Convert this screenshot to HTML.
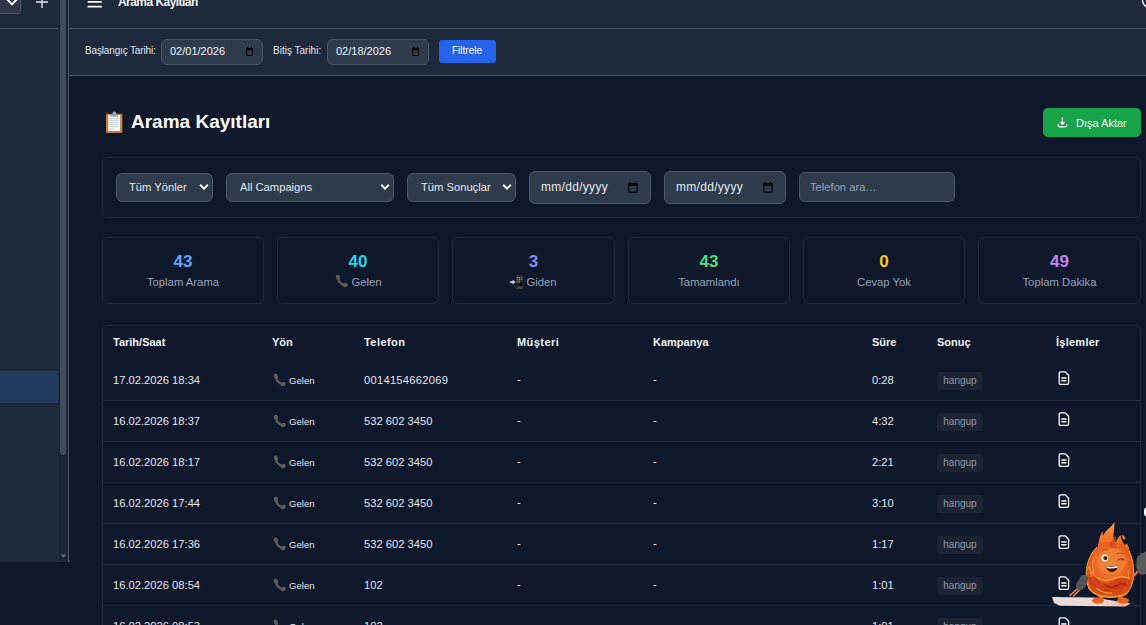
<!DOCTYPE html>
<html><head><meta charset="utf-8">
<style>
*{box-sizing:border-box;margin:0;padding:0}
html,body{width:1146px;height:625px;overflow:hidden;background:#0f172a;font-family:"Liberation Sans",sans-serif;color:#e2e8f0}
.a{position:absolute}
.t{position:absolute;white-space:nowrap;line-height:1}
/* left panel */
#lp{left:0;top:0;width:68px;height:562px;background:#1e293b}
#lpb{left:68px;top:0;width:1px;height:562px;background:#4b5563}
#track{left:59px;top:0;width:9px;height:562px;background:#1b2436}
#thumb{left:60px;top:-10px;width:6px;height:465px;background:#404b5d;border-radius:3px}
/* header */
#hdr{left:69px;top:0;width:1077px;height:76px;background:#1e293b}
.hl{height:1px;background:#475569}
.inp{position:absolute;background:#2f3a4b;border:1px solid #4a5568;border-radius:6px}
.card{position:absolute;border:1px solid #1e293b;border-radius:6px}
.stat .n{position:absolute;left:0;width:100%;text-align:center;font-weight:700;font-size:17px;line-height:1;top:15px}
.stat .l{position:absolute;left:0;width:100%;text-align:center;font-size:11.3px;line-height:1;top:39px;color:#94a3b8}
.th{position:absolute;font-weight:700;font-size:11px;color:#f1f5f9;white-space:nowrap;line-height:1}
.td{position:absolute;font-size:11.2px;color:#e2e8f0;white-space:nowrap;line-height:1}
.sep{position:absolute;left:103px;width:1037px;height:1px;background:#1e293b}
.badge{position:absolute;width:46px;height:18px;background:#1c2434;border-radius:3px;font-size:10px;color:#8e98a8;text-align:center;line-height:18px}
</style></head>
<body>
<!-- left panel -->
<div class="a" id="lp"></div>
<div class="a" id="track"></div>
<div class="a" id="thumb"></div>
<div class="a" id="lpb"></div>
<div class="a hl" style="left:0;top:28px;width:58px"></div>
<div class="a" style="left:-4px;top:-6px;width:25px;height:20px;background:#2d3547;border:1px solid #4b5668;border-radius:3px"></div>
<svg class="a" style="left:6px;top:-1.5px" width="12" height="9" viewBox="0 0 12 9"><path d="M1.4 0.6 L6 5.4 L10.6 0.6" fill="none" stroke="#fff" stroke-width="2"/></svg>
<svg class="a" style="left:35px;top:-5px" width="14" height="14" viewBox="0 0 14 14"><path d="M7 0 V13 M1 7 H13" fill="none" stroke="#e5e7eb" stroke-width="1.4"/></svg>
<div class="a" style="left:0;top:371px;width:58px;height:32px;background:#233a60"></div>
<svg class="a" style="left:59px;top:552px" width="9" height="8" viewBox="0 0 9 8"><path d="M1.5 2.5 H7.5 L4.5 6 Z" fill="#5b6577"/></svg>

<!-- header -->
<div class="a" id="hdr"></div>
<div class="a hl" style="left:69px;top:28px;width:1077px"></div>
<div class="a hl" style="left:69px;top:75px;width:1077px"></div>
<svg class="a" style="left:87px;top:0px" width="16" height="10" viewBox="0 0 16 10"><path d="M1.3 1.8 H14.1 M1.3 6.7 H14.1" fill="none" stroke="#fff" stroke-width="1.8" stroke-linecap="round"/></svg>
<div class="t" style="left:118px;top:-4px;font-size:12px;font-weight:700;letter-spacing:-0.55px;color:#f1f5f9">Arama Kayıtları</div>
<svg class="a" style="left:1136px;top:-8px" width="20" height="18" viewBox="0 0 20 18"><circle cx="14" cy="8" r="7.6" fill="none" stroke="#f1f5f9" stroke-width="1.5"/></svg>

<!-- filter bar -->
<div class="t" style="left:85px;top:46px;font-size:10px;letter-spacing:-0.15px;color:#e2e8f0">Başlangıç Tarihi:</div>
<div class="inp" style="left:161px;top:39px;width:102px;height:26px"></div>
<div class="t" style="left:170px;top:46px;font-size:11px;color:#f1f5f9">02/01/2026</div>
<svg class="a" style="left:246px;top:47px" width="8" height="9" viewBox="0 0 8 9"><rect x="0.55" y="1.55" width="5.9" height="6.9" rx="1" fill="none" stroke="#05070b" stroke-width="1.1"/><rect x="0" y="1" width="7" height="2.3" fill="#05070b"/><rect x="1.1" y="0" width="1" height="1.5" fill="#05070b"/><rect x="4.9" y="0" width="1" height="1.5" fill="#05070b"/></svg>
<div class="t" style="left:273px;top:46px;font-size:10px;color:#e2e8f0">Bitiş Tarihi:</div>
<div class="inp" style="left:327px;top:39px;width:102px;height:26px"></div>
<div class="t" style="left:336px;top:46px;font-size:11px;color:#f1f5f9">02/18/2026</div>
<svg class="a" style="left:412px;top:47px" width="8" height="9" viewBox="0 0 8 9"><rect x="0.55" y="1.55" width="5.9" height="6.9" rx="1" fill="none" stroke="#05070b" stroke-width="1.1"/><rect x="0" y="1" width="7" height="2.3" fill="#05070b"/><rect x="1.1" y="0" width="1" height="1.5" fill="#05070b"/><rect x="4.9" y="0" width="1" height="1.5" fill="#05070b"/></svg>
<div class="a" style="left:439px;top:40px;width:57px;height:23px;background:#2563eb;border-radius:3px"></div>
<div class="t" style="left:452px;top:46px;font-size:10px;color:#fff">Filtrele</div>

<!-- title -->
<svg class="a" style="left:105px;top:111px" width="18" height="22" viewBox="0 0 18 22">
<rect x="1" y="2.8" width="16.4" height="19.1" rx="1.2" fill="#c47c3e"/>
<rect x="3.2" y="4" width="12" height="16" fill="#f7f9fa"/>
<path d="M4.3 7.5H13.6M4.3 9.3H13.6M4.3 11.4H13.6M4.3 13.6H13.6M4.3 15.6H13.6M4.3 18H8.5" stroke="#bcc6ce" stroke-width="0.85"/>
<path d="M5.2 5.8 V4.6 Q5.2 3.4 6.6 3.4 H12 Q13.2 3.4 13.2 4.6 V5.8 Z" fill="#88aebd"/>
<path d="M7.3 3.6 Q7.3 0.6 9.3 0.6 Q11.3 0.6 11.3 3.6 Z" fill="#88aebd"/>
</svg>
<div class="t" style="left:131px;top:112px;font-size:19px;font-weight:700;color:#fff">Arama Kayıtları</div>

<div class="a" style="left:1043px;top:108px;width:98px;height:29px;background:#16a34a;border-radius:5px"></div>
<svg class="a" style="left:1057px;top:117px" width="11" height="11" viewBox="0 0 11 11"><path d="M5.4 0.8 V7.2 M3.5 5.4 L5.4 7.3 L7.3 5.4 M1.2 7.6 V8.6 Q1.2 9.8 2.4 9.8 H8.4 Q9.6 9.8 9.6 8.6 V7.6" fill="none" stroke="#fff" stroke-width="1.25" stroke-linecap="round" stroke-linejoin="round"/></svg>
<div class="t" style="left:1076px;top:118px;font-size:11px;color:#f0fdf4">Dışa Aktar</div>

<!-- filter card -->
<div class="card" style="left:102px;top:157px;width:1039px;height:61px"></div>
<div class="inp" style="left:116px;top:173px;width:97px;height:29px;border-radius:6px"></div>
<div class="t" style="left:129px;top:182px;font-size:11.2px;color:#e2e8f0">Tüm Yönler</div>
<div class="inp" style="left:226px;top:173px;width:168px;height:29px;border-radius:6px"></div>
<div class="t" style="left:240px;top:182px;font-size:11.2px;color:#e2e8f0">All Campaigns</div>
<div class="inp" style="left:407px;top:173px;width:109px;height:29px;border-radius:6px"></div>
<div class="t" style="left:421px;top:182px;font-size:11.2px;color:#e2e8f0">Tüm Sonuçlar</div>
<svg class="a" style="left:199px;top:183px" width="10" height="8" viewBox="0 0 10 8"><path d="M1.2 1.8 L5 5.6 L8.8 1.8" fill="none" stroke="#fff" stroke-width="2"/></svg>
<svg class="a" style="left:380px;top:183px" width="10" height="8" viewBox="0 0 10 8"><path d="M1.2 1.8 L5 5.6 L8.8 1.8" fill="none" stroke="#fff" stroke-width="2"/></svg>
<svg class="a" style="left:502px;top:183px" width="10" height="8" viewBox="0 0 10 8"><path d="M1.2 1.8 L5 5.6 L8.8 1.8" fill="none" stroke="#fff" stroke-width="2"/></svg>
<div class="inp" style="left:529px;top:171px;width:122px;height:33px"></div>
<div class="t" style="left:541px;top:181px;font-size:12px;letter-spacing:0.3px;color:#e2e8f0">mm/dd/yyyy</div>
<svg class="a" style="left:628px;top:182px" width="11" height="11" viewBox="0 0 11 11"><rect x="0.75" y="1.75" width="8.5" height="8.5" rx="1.5" fill="none" stroke="#070a10" stroke-width="1.5"/><rect x="0.2" y="1.2" width="9.6" height="2.8" fill="#05070b"/><path d="M2.5 0V2 M7.5 0V2" stroke="#05070b" stroke-width="1.3"/></svg>
<div class="inp" style="left:664px;top:171px;width:122px;height:33px"></div>
<div class="t" style="left:676px;top:181px;font-size:12px;letter-spacing:0.3px;color:#e2e8f0">mm/dd/yyyy</div>
<svg class="a" style="left:763px;top:182px" width="11" height="11" viewBox="0 0 11 11"><rect x="0.75" y="1.75" width="8.5" height="8.5" rx="1.5" fill="none" stroke="#070a10" stroke-width="1.5"/><rect x="0.2" y="1.2" width="9.6" height="2.8" fill="#05070b"/><path d="M2.5 0V2 M7.5 0V2" stroke="#05070b" stroke-width="1.3"/></svg>
<div class="inp" style="left:799px;top:172px;width:156px;height:30px"></div>
<div class="t" style="left:810px;top:182px;font-size:11.2px;color:#94a3b8">Telefon ara…</div>

<!-- stats -->
<div class="card stat" style="left:102px;top:237px;width:162px;height:67px"><div class="n" style="color:#60a5fa">43</div><div class="l">Toplam Arama</div></div>
<div class="card stat" style="left:277px;top:237px;width:162px;height:67px"><div class="n" style="color:#22d3ee">40</div><div class="l"><span style="display:inline-block;width:13px;height:1px;position:relative;margin-right:4px"><svg style="position:absolute;left:1px;top:-11px" width="13" height="14" viewBox="0 0 13 14"><path d="M2.9 3.6 Q3.6 9.6 10 11.4" fill="none" stroke="#5a5a5a" stroke-width="2.4" stroke-linecap="round"/><ellipse cx="2.9" cy="3.2" rx="2.1" ry="2.6" transform="rotate(-20 2.9 3.2)" fill="#5c5c5c"/><ellipse cx="10.2" cy="11.1" rx="2.6" ry="2.1" transform="rotate(-20 10.2 11.1)" fill="#5c5c5c"/></svg></span>Gelen</div></div>
<div class="card stat" style="left:452px;top:237px;width:163px;height:67px"><div class="n" style="color:#818cf8">3</div><div class="l"><span style="display:inline-block;width:13px;height:1px;position:relative;margin-right:3px"><svg style="position:absolute;left:0;top:-10px" width="14" height="15" viewBox="0 0 14 15"><path d="M0.9 7.1 H3.4" stroke="#d3dde2" stroke-width="1.8" stroke-linecap="round"/><path d="M2.6 4.6 L5.4 7.1 L2.6 9.6 Z" fill="#d3dde2"/><rect x="6.1" y="0.2" width="7" height="13.8" rx="1.1" fill="#3c3c3c"/><rect x="6.7" y="1.6" width="5.8" height="11" fill="#050505"/><rect x="6.8" y="2" width="1.8" height="1.5" fill="#d88a20"/><rect x="8.8" y="2" width="1.6" height="1.5" fill="#e0608a"/><rect x="10.6" y="2" width="1.8" height="1.5" fill="#2a6a9a"/><rect x="6.8" y="3.8" width="1.8" height="1.5" fill="#2a8a6a"/><rect x="8.8" y="3.8" width="1.6" height="1.5" fill="#e07a20"/><rect x="10.6" y="3.8" width="1.8" height="1.5" fill="#2a7a9a"/><rect x="6.8" y="5.6" width="1.8" height="1.5" fill="#c05a30"/><rect x="8.8" y="5.6" width="1.6" height="1.5" fill="#30a070"/><rect x="6.8" y="7.3" width="3.6" height="0.9" fill="#3a90c0"/><rect x="6.8" y="11.3" width="1.8" height="1.3" fill="#2a5a8a"/><rect x="8.8" y="11.3" width="1.6" height="1.3" fill="#2a9a6a"/><rect x="10.6" y="11.3" width="1.8" height="1.3" fill="#a03a4a"/></svg></span>Giden</div></div>
<div class="card stat" style="left:628px;top:237px;width:162px;height:67px"><div class="n" style="color:#4ade80">43</div><div class="l">Tamamlandı</div></div>
<div class="card stat" style="left:803px;top:237px;width:162px;height:67px"><div class="n" style="color:#facc15">0</div><div class="l">Cevap Yok</div></div>
<div class="card stat" style="left:978px;top:237px;width:163px;height:67px"><div class="n" style="color:#c084fc">49</div><div class="l">Toplam Dakika</div></div>

<!-- table -->
<div class="card" style="left:102px;top:325px;width:1039px;height:400px"></div>
<div class="th" style="left:113px;top:337px">Tarih/Saat</div>
<div class="th" style="left:272px;top:337px">Yön</div>
<div class="th" style="left:364px;top:337px;letter-spacing:0.45px">Telefon</div>
<div class="th" style="left:517px;top:337px;letter-spacing:0.45px">Müşteri</div>
<div class="th" style="left:653px;top:337px">Kampanya</div>
<div class="th" style="left:872px;top:337px">Süre</div>
<div class="th" style="left:937px;top:337px">Sonuç</div>
<div class="th" style="left:1056px;top:337px;letter-spacing:0.25px">İşlemler</div>

<!--ROWS-->
<div class="td" style="left:113px;top:375px">17.02.2026 18:34</div>
<svg class="a" style="left:273px;top:373px" width="13" height="14" viewBox="0 0 13 14"><path d="M2.9 3.6 Q3.6 9.6 10 11.4" fill="none" stroke="#5a5a5a" stroke-width="2.4" stroke-linecap="round"/><ellipse cx="2.9" cy="3.2" rx="2.1" ry="2.6" transform="rotate(-20 2.9 3.2)" fill="#5c5c5c"/><ellipse cx="10.2" cy="11.1" rx="2.6" ry="2.1" transform="rotate(-20 10.2 11.1)" fill="#5c5c5c"/></svg>
<div class="td" style="left:289px;top:376px;font-size:9.6px">Gelen</div>
<div class="td" style="left:364px;top:375px;letter-spacing:0.25px">0014154662069</div>
<div class="td" style="left:517px;top:374px">-</div>
<div class="td" style="left:653px;top:374px">-</div>
<div class="td" style="left:872px;top:375px">0:28</div>
<div class="badge" style="left:937px;top:372px">hangup</div>
<svg class="a" style="left:1058px;top:371px" width="13" height="15" viewBox="0 0 13 15"><path d="M2.8 0.9 H7.3 L10.6 4.2 V11.8 Q10.6 13.4 9 13.4 H2.8 Q1.2 13.4 1.2 11.8 V2.5 Q1.2 0.9 2.8 0.9 Z" fill="none" stroke="#fff" stroke-width="1.3" stroke-linejoin="round"/><path d="M3.8 7 H8 M3.8 9.8 H8" stroke="#fff" stroke-width="1.4" stroke-linecap="round"/></svg>
<div class="sep" style="top:400px"></div>
<div class="td" style="left:113px;top:416px">16.02.2026 18:37</div>
<svg class="a" style="left:273px;top:414px" width="13" height="14" viewBox="0 0 13 14"><path d="M2.9 3.6 Q3.6 9.6 10 11.4" fill="none" stroke="#5a5a5a" stroke-width="2.4" stroke-linecap="round"/><ellipse cx="2.9" cy="3.2" rx="2.1" ry="2.6" transform="rotate(-20 2.9 3.2)" fill="#5c5c5c"/><ellipse cx="10.2" cy="11.1" rx="2.6" ry="2.1" transform="rotate(-20 10.2 11.1)" fill="#5c5c5c"/></svg>
<div class="td" style="left:289px;top:417px;font-size:9.6px">Gelen</div>
<div class="td" style="left:364px;top:416px">532 602 3450</div>
<div class="td" style="left:517px;top:415px">-</div>
<div class="td" style="left:653px;top:415px">-</div>
<div class="td" style="left:872px;top:416px">4:32</div>
<div class="badge" style="left:937px;top:413px">hangup</div>
<svg class="a" style="left:1058px;top:412px" width="13" height="15" viewBox="0 0 13 15"><path d="M2.8 0.9 H7.3 L10.6 4.2 V11.8 Q10.6 13.4 9 13.4 H2.8 Q1.2 13.4 1.2 11.8 V2.5 Q1.2 0.9 2.8 0.9 Z" fill="none" stroke="#fff" stroke-width="1.3" stroke-linejoin="round"/><path d="M3.8 7 H8 M3.8 9.8 H8" stroke="#fff" stroke-width="1.4" stroke-linecap="round"/></svg>
<div class="sep" style="top:441px"></div>
<div class="td" style="left:113px;top:457px">16.02.2026 18:17</div>
<svg class="a" style="left:273px;top:455px" width="13" height="14" viewBox="0 0 13 14"><path d="M2.9 3.6 Q3.6 9.6 10 11.4" fill="none" stroke="#5a5a5a" stroke-width="2.4" stroke-linecap="round"/><ellipse cx="2.9" cy="3.2" rx="2.1" ry="2.6" transform="rotate(-20 2.9 3.2)" fill="#5c5c5c"/><ellipse cx="10.2" cy="11.1" rx="2.6" ry="2.1" transform="rotate(-20 10.2 11.1)" fill="#5c5c5c"/></svg>
<div class="td" style="left:289px;top:458px;font-size:9.6px">Gelen</div>
<div class="td" style="left:364px;top:457px">532 602 3450</div>
<div class="td" style="left:517px;top:456px">-</div>
<div class="td" style="left:653px;top:456px">-</div>
<div class="td" style="left:872px;top:457px">2:21</div>
<div class="badge" style="left:937px;top:454px">hangup</div>
<svg class="a" style="left:1058px;top:453px" width="13" height="15" viewBox="0 0 13 15"><path d="M2.8 0.9 H7.3 L10.6 4.2 V11.8 Q10.6 13.4 9 13.4 H2.8 Q1.2 13.4 1.2 11.8 V2.5 Q1.2 0.9 2.8 0.9 Z" fill="none" stroke="#fff" stroke-width="1.3" stroke-linejoin="round"/><path d="M3.8 7 H8 M3.8 9.8 H8" stroke="#fff" stroke-width="1.4" stroke-linecap="round"/></svg>
<div class="sep" style="top:482px"></div>
<div class="td" style="left:113px;top:498px">16.02.2026 17:44</div>
<svg class="a" style="left:273px;top:496px" width="13" height="14" viewBox="0 0 13 14"><path d="M2.9 3.6 Q3.6 9.6 10 11.4" fill="none" stroke="#5a5a5a" stroke-width="2.4" stroke-linecap="round"/><ellipse cx="2.9" cy="3.2" rx="2.1" ry="2.6" transform="rotate(-20 2.9 3.2)" fill="#5c5c5c"/><ellipse cx="10.2" cy="11.1" rx="2.6" ry="2.1" transform="rotate(-20 10.2 11.1)" fill="#5c5c5c"/></svg>
<div class="td" style="left:289px;top:499px;font-size:9.6px">Gelen</div>
<div class="td" style="left:364px;top:498px">532 602 3450</div>
<div class="td" style="left:517px;top:497px">-</div>
<div class="td" style="left:653px;top:497px">-</div>
<div class="td" style="left:872px;top:498px">3:10</div>
<div class="badge" style="left:937px;top:495px">hangup</div>
<svg class="a" style="left:1058px;top:494px" width="13" height="15" viewBox="0 0 13 15"><path d="M2.8 0.9 H7.3 L10.6 4.2 V11.8 Q10.6 13.4 9 13.4 H2.8 Q1.2 13.4 1.2 11.8 V2.5 Q1.2 0.9 2.8 0.9 Z" fill="none" stroke="#fff" stroke-width="1.3" stroke-linejoin="round"/><path d="M3.8 7 H8 M3.8 9.8 H8" stroke="#fff" stroke-width="1.4" stroke-linecap="round"/></svg>
<div class="sep" style="top:523px"></div>
<div class="td" style="left:113px;top:539px">16.02.2026 17:36</div>
<svg class="a" style="left:273px;top:537px" width="13" height="14" viewBox="0 0 13 14"><path d="M2.9 3.6 Q3.6 9.6 10 11.4" fill="none" stroke="#5a5a5a" stroke-width="2.4" stroke-linecap="round"/><ellipse cx="2.9" cy="3.2" rx="2.1" ry="2.6" transform="rotate(-20 2.9 3.2)" fill="#5c5c5c"/><ellipse cx="10.2" cy="11.1" rx="2.6" ry="2.1" transform="rotate(-20 10.2 11.1)" fill="#5c5c5c"/></svg>
<div class="td" style="left:289px;top:540px;font-size:9.6px">Gelen</div>
<div class="td" style="left:364px;top:539px">532 602 3450</div>
<div class="td" style="left:517px;top:538px">-</div>
<div class="td" style="left:653px;top:538px">-</div>
<div class="td" style="left:872px;top:539px">1:17</div>
<div class="badge" style="left:937px;top:536px">hangup</div>
<svg class="a" style="left:1058px;top:535px" width="13" height="15" viewBox="0 0 13 15"><path d="M2.8 0.9 H7.3 L10.6 4.2 V11.8 Q10.6 13.4 9 13.4 H2.8 Q1.2 13.4 1.2 11.8 V2.5 Q1.2 0.9 2.8 0.9 Z" fill="none" stroke="#fff" stroke-width="1.3" stroke-linejoin="round"/><path d="M3.8 7 H8 M3.8 9.8 H8" stroke="#fff" stroke-width="1.4" stroke-linecap="round"/></svg>
<div class="sep" style="top:564px"></div>
<div class="td" style="left:113px;top:580px">16.02.2026 08:54</div>
<svg class="a" style="left:273px;top:578px" width="13" height="14" viewBox="0 0 13 14"><path d="M2.9 3.6 Q3.6 9.6 10 11.4" fill="none" stroke="#5a5a5a" stroke-width="2.4" stroke-linecap="round"/><ellipse cx="2.9" cy="3.2" rx="2.1" ry="2.6" transform="rotate(-20 2.9 3.2)" fill="#5c5c5c"/><ellipse cx="10.2" cy="11.1" rx="2.6" ry="2.1" transform="rotate(-20 10.2 11.1)" fill="#5c5c5c"/></svg>
<div class="td" style="left:289px;top:581px;font-size:9.6px">Gelen</div>
<div class="td" style="left:364px;top:580px">102</div>
<div class="td" style="left:517px;top:579px">-</div>
<div class="td" style="left:653px;top:579px">-</div>
<div class="td" style="left:872px;top:580px">1:01</div>
<div class="badge" style="left:937px;top:577px">hangup</div>
<svg class="a" style="left:1058px;top:576px" width="13" height="15" viewBox="0 0 13 15"><path d="M2.8 0.9 H7.3 L10.6 4.2 V11.8 Q10.6 13.4 9 13.4 H2.8 Q1.2 13.4 1.2 11.8 V2.5 Q1.2 0.9 2.8 0.9 Z" fill="none" stroke="#fff" stroke-width="1.3" stroke-linejoin="round"/><path d="M3.8 7 H8 M3.8 9.8 H8" stroke="#fff" stroke-width="1.4" stroke-linecap="round"/></svg>
<div class="sep" style="top:605px"></div>
<div class="td" style="left:113px;top:621px">16.02.2026 08:53</div>
<svg class="a" style="left:273px;top:619px" width="13" height="14" viewBox="0 0 13 14"><path d="M2.9 3.6 Q3.6 9.6 10 11.4" fill="none" stroke="#5a5a5a" stroke-width="2.4" stroke-linecap="round"/><ellipse cx="2.9" cy="3.2" rx="2.1" ry="2.6" transform="rotate(-20 2.9 3.2)" fill="#5c5c5c"/><ellipse cx="10.2" cy="11.1" rx="2.6" ry="2.1" transform="rotate(-20 10.2 11.1)" fill="#5c5c5c"/></svg>
<div class="td" style="left:289px;top:622px;font-size:9.6px">Gelen</div>
<div class="td" style="left:364px;top:621px">102</div>
<div class="td" style="left:517px;top:620px">-</div>
<div class="td" style="left:653px;top:620px">-</div>
<div class="td" style="left:872px;top:621px">1:01</div>
<div class="badge" style="left:937px;top:618px">hangup</div>
<svg class="a" style="left:1058px;top:617px" width="13" height="15" viewBox="0 0 13 15"><path d="M2.8 0.9 H7.3 L10.6 4.2 V11.8 Q10.6 13.4 9 13.4 H2.8 Q1.2 13.4 1.2 11.8 V2.5 Q1.2 0.9 2.8 0.9 Z" fill="none" stroke="#fff" stroke-width="1.3" stroke-linejoin="round"/><path d="M3.8 7 H8 M3.8 9.8 H8" stroke="#fff" stroke-width="1.4" stroke-linecap="round"/></svg>
<!--/ROWS-->
<!-- right edge widgets -->
<div class="a" style="left:1144px;top:507px;width:14px;height:10px;background:#f1f5f9;border-radius:4px"></div>
<!-- mascot -->
<svg class="a" style="left:1046px;top:515px" width="100" height="97" viewBox="1046 515 100 97">
<defs>
<radialGradient id="fb" cx="1110" cy="563" r="36" gradientUnits="userSpaceOnUse">
<stop offset="0" stop-color="#f3843a"/><stop offset="0.4" stop-color="#ee6c26"/><stop offset="0.75" stop-color="#dc4a1a"/><stop offset="1" stop-color="#ff9a30"/>
</radialGradient>
<linearGradient id="ft" x1="0" y1="522" x2="0" y2="550" gradientUnits="userSpaceOnUse">
<stop offset="0" stop-color="#ff9448"/><stop offset="0.5" stop-color="#f57a2c"/><stop offset="1" stop-color="#ec6522"/>
</linearGradient>
<linearGradient id="pl" x1="1052" y1="0" x2="1130" y2="0" gradientUnits="userSpaceOnUse">
<stop offset="0" stop-color="#e4dde0"/><stop offset="0.6" stop-color="#efd6d3"/><stop offset="1" stop-color="#f0b2a4"/>
</linearGradient>
</defs>
<path d="M1052 597 L1094 597.5 L1131 603.5 L1125 606.5 L1060 605.8 L1054 603 Z" fill="url(#pl)"/>
<path d="M1098.5 593 h5 v6 h-5z M1118 593 h5 v6 h-5z" fill="#e2621e"/>
<ellipse cx="1098" cy="600.6" rx="6" ry="3.1" fill="#e8641c"/>
<ellipse cx="1123" cy="600.6" rx="6" ry="3.1" fill="#e8641c"/>
<path d="M1131 577 Q1135 576 1137.5 571" fill="none" stroke="#ec6a20" stroke-width="2.4"/>
<path d="M1136.5 561 Q1137 555 1139.5 555.5 Q1141 552 1143.5 553 Q1145 551 1146 552 L1146 574 Q1141 576 1138 573 Q1135.5 567 1136.5 561 Z" fill="#595959"/>
<g fill="url(#ft)">
<path d="M1097 552 Q1100 538 1107 530 Q1112 526 1114.5 522 Q1114.5 529 1113.5 534 Q1113 539 1116 543 L1117 550 Z"/>
<path d="M1097.5 550 Q1098.5 538 1102.5 531 Q1102.5 537 1104.5 541 L1104 550 Z"/>
<path d="M1114 548 Q1116 539 1120.5 535 Q1121 540 1124 544 Q1126.5 545.5 1127 543 Q1130 549 1130.5 556 Z"/>
</g>
<ellipse cx="1123.6" cy="537.2" rx="1.2" ry="2.6" transform="rotate(-35 1123.6 537.2)" fill="#f07a34"/>
<path d="M1110 597.5 Q1095 597 1089 589 Q1084.5 578 1087 566 Q1089.5 554 1097 547 Q1105 541 1113 542 Q1124 543 1129 551 Q1134 560 1133.5 574 Q1133 588 1126 594.5 Q1119 597.5 1110 597.5 Z" fill="url(#fb)"/>
<path d="M1110 597.5 Q1095 597 1089 589 Q1084.5 578 1087 566 Q1089.5 554 1097 547 M1129 551 Q1134 560 1133.5 574 Q1133 588 1126 594.5 Q1119 597.5 1110 597.5" fill="none" stroke="#ffb040" stroke-width="0.9"/>
<path d="M1108.5 548 Q1111 539 1116.5 535.5 Q1114.5 542 1117.5 549 Z" fill="#d4481a" opacity="0.7"/>
<path d="M1090 572 Q1094 585 1104 590 M1100 582 Q1108 592 1120 590 M1128 570 Q1130 582 1124 590 M1094 557 Q1091 566 1094 574" fill="none" stroke="#ffa83a" stroke-width="0.8" opacity="0.85"/>
<path d="M1089 578 Q1094 574 1099 580 Q1104 586 1112 581 Q1120 576 1128 579 Q1133 583 1130 590 Q1124 596 1110 596 Q1095 596 1090 588 Z" fill="#c0300e" opacity="0.55"/><path d="M1104 584 Q1110 590 1118 585 Q1123 582 1127 586" fill="none" stroke="#a01e08" stroke-width="2.2" opacity="0.5"/><path d="M1088.5 566 Q1092 576 1100 579 Q1106 582 1112 579 Q1120 575 1130 578 M1096 588 Q1104 594 1112 593" fill="none" stroke="#ffc040" stroke-width="0.9" opacity="0.9"/>
<ellipse cx="1112" cy="561" rx="14" ry="13" fill="#f28438" opacity="0.7"/>
<circle cx="1104.8" cy="558" r="3.4" fill="#f0ecea"/>
<circle cx="1105.4" cy="558.1" r="2.1" fill="#4a2e22"/>
<circle cx="1105.6" cy="558.1" r="1.1" fill="#0c0808"/>
<path d="M1117.5 560.5 Q1121 557.5 1124.5 560.2" fill="none" stroke="#8a2e10" stroke-width="1.1"/>
<path d="M1101.5 550.8 Q1104.5 548.6 1107.5 550" fill="none" stroke="#b8481a" stroke-width="1"/>
<path d="M1117 553.8 Q1120 551.8 1123.5 553.8" fill="none" stroke="#b8481a" stroke-width="1"/>
<path d="M1105.5 566 Q1112 567.5 1118.5 565.5 Q1116.5 572.5 1111.5 572 Q1107 571.5 1105.5 566 Z" fill="#3a1008"/>
<path d="M1106 566.2 Q1112 567.8 1118 565.8 L1117.4 567.8 Q1112 569.3 1106.8 568 Z" fill="#fbf6f2"/>
<path d="M1082 575 Q1086 574.5 1088.5 577.5 L1086 586 Q1082 591 1077.5 590.5 Q1075 588 1076.5 583 Z" fill="#575757"/><path d="M1079 580 L1086 582 M1078 584 L1085 586" stroke="#3e3e3e" stroke-width="0.8"/>
<path d="M1070 595.5 L1076.5 589.5 M1073.5 596 L1079 590.5" stroke="#d88a60" stroke-width="1.7" stroke-linecap="round"/><circle cx="1133.3" cy="579" r="1.2" fill="#ee7030"/>
</svg>
</body></html>
